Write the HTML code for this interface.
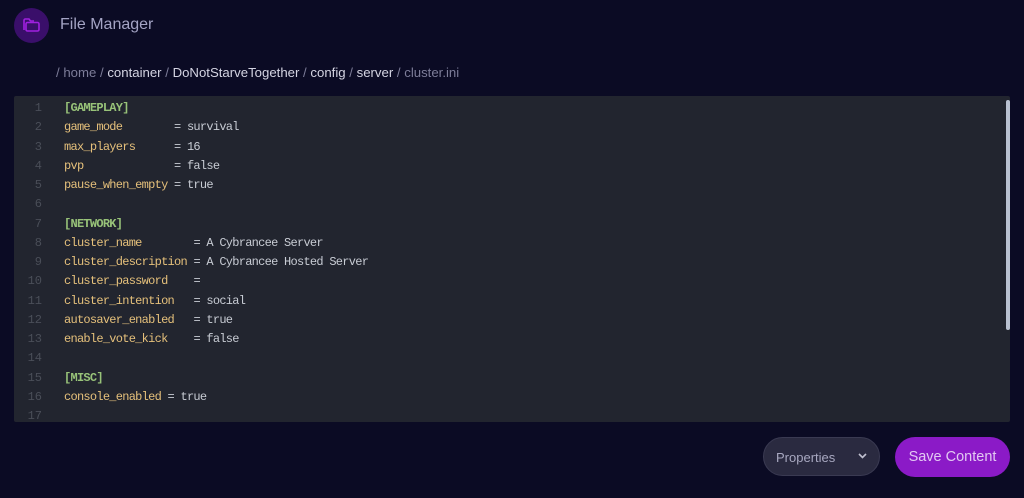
<!DOCTYPE html>
<html><head><style>
body{margin:0;width:1024px;height:498px;background:#0b0b24;font-family:"Liberation Sans",sans-serif;position:relative;overflow:hidden}
.ic{position:absolute;left:14px;top:8px;width:35px;height:35px;border-radius:50%;background:#3a0f6a}
.ic svg{position:absolute;left:9px;top:10px}
.title{position:absolute;left:60px;top:16px;font-size:16px;color:#a4a4c4}
.bc{position:absolute;left:56px;top:65px;font-size:13.2px;color:#7d7d99}
.bc b{font-weight:normal;color:#d4d4e2}
.ed{position:absolute;left:14px;top:96px;width:996px;height:326px;background:#22252f;border-radius:2px;overflow:hidden}
.sb{position:absolute;left:992px;top:4px;width:4px;height:230px;background:#b8c0d0;border-radius:2px}
pre{margin:0;position:absolute;top:3px;left:0;font-family:"Liberation Mono",monospace;font-size:12px;letter-spacing:-0.73px;line-height:19.25px;color:#c8ccd4}
.n{display:inline-block;width:28px;text-align:right;color:#4a4e58;margin-right:22px;letter-spacing:0}
.k{color:#e5c07b}.s{color:#98c379;font-weight:bold}
.sel{position:absolute;left:763px;top:437px;width:117px;height:39px;border-radius:20px;background:#2a2a40;border:1px solid #3a3a52;box-sizing:border-box;color:#a8a8c0;font-size:13px}
.sel span{position:absolute;left:12px;top:12px}
.sel svg{position:absolute;left:94px;top:15px}
.btn{position:absolute;left:895px;top:437px;width:115px;height:40px;border-radius:20px;background:#8b1ac7;color:#e2c8f2;font-size:14.5px;text-align:center;line-height:40px}
</style></head><body>
<div class="ic"><svg width="17" height="14" viewBox="0 0 17 14" fill="none" stroke="#a020e0" stroke-width="1.6"><path d="M1 12V2.5C1 1.7 1.6 1 2.4 1H6l1.5 2H11"/><rect x="3" y="4.5" width="13" height="8.5" rx="1.5"/></svg></div>
<div class="title">File Manager</div>
<div class="bc">/ home / <b>container</b> / <b>DoNotStarveTogether</b> / <b>config</b> / <b>server</b> / cluster.ini</div>
<div class="ed"><div class="sb"></div>
<pre><span class="n">1</span><span class="s">[GAMEPLAY]</span>
<span class="n">2</span><span class="k">game_mode        </span>= survival
<span class="n">3</span><span class="k">max_players      </span>= 16
<span class="n">4</span><span class="k">pvp              </span>= false
<span class="n">5</span><span class="k">pause_when_empty </span>= true
<span class="n">6</span>
<span class="n">7</span><span class="s">[NETWORK]</span>
<span class="n">8</span><span class="k">cluster_name        </span>= A Cybrancee Server
<span class="n">9</span><span class="k">cluster_description </span>= A Cybrancee Hosted Server
<span class="n">10</span><span class="k">cluster_password    </span>=
<span class="n">11</span><span class="k">cluster_intention   </span>= social
<span class="n">12</span><span class="k">autosaver_enabled   </span>= true
<span class="n">13</span><span class="k">enable_vote_kick    </span>= false
<span class="n">14</span>
<span class="n">15</span><span class="s">[MISC]</span>
<span class="n">16</span><span class="k">console_enabled </span>= true
<span class="n">17</span></pre></div>
<div class="sel"><span>Properties</span><svg width="9" height="6" viewBox="0 0 9 6" fill="none" stroke="#c0c0d0" stroke-width="1.6"><path d="M1 1l3.5 3.5L8 1"/></svg></div>
<div class="btn">Save Content</div>
</body></html>
